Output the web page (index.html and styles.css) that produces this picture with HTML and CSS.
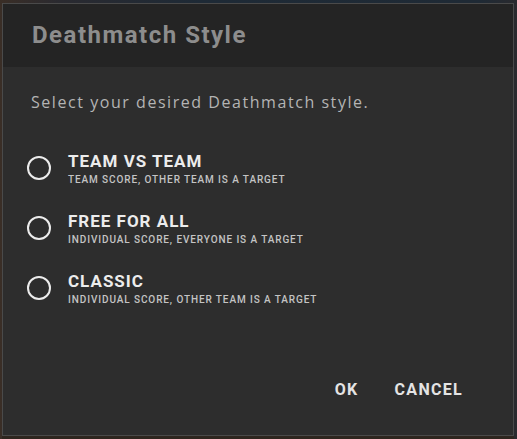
FILE: index.html
```html
<!DOCTYPE html>
<html>
<head>
<meta charset="utf-8">
<link rel="stylesheet" href="styles.css">
</head>
<body>
<div class="dialog">
  <div class="header"><h1 class="title">Deathmatch Style</h1></div>
  <div class="body">
    <p class="prompt">Select your desired Deathmatch style.</p>
    <div class="options">
      <div class="option">
        <span class="radio"></span>
        <div class="label">
          <div class="name">TEAM VS TEAM</div>
          <div class="desc">TEAM SCORE, OTHER TEAM IS A TARGET</div>
        </div>
      </div>
      <div class="option">
        <span class="radio"></span>
        <div class="label">
          <div class="name">FREE FOR ALL</div>
          <div class="desc">INDIVIDUAL SCORE, EVERYONE IS A TARGET</div>
        </div>
      </div>
      <div class="option">
        <span class="radio"></span>
        <div class="label">
          <div class="name">CLASSIC</div>
          <div class="desc">INDIVIDUAL SCORE, OTHER TEAM IS A TARGET</div>
        </div>
      </div>
    </div>
    <div class="actions">
      <button class="btn">OK</button>
      <button class="btn">CANCEL</button>
    </div>
  </div>
</div>
</body>
</html>
```
FILE: styles.css
```css
html, body {
  margin: 0;
  padding: 0;
}
body {
  width: 517px;
  height: 439px;
  overflow: hidden;
  background: linear-gradient(90deg, #3a2e26 0px, #2a2a30 60px, #1e2a36 200px, #1f2a35 480px, #2a2a2e 517px);
  font-family: Roboto, "Liberation Sans", sans-serif;
}
.dialog {
  margin: 3px 0 0 2px;
  width: 510px;
  height: 431px;
  border: 1px solid #4a4a4a;
  display: flex;
  flex-direction: column;
  background: #2d2d2d;
  box-shadow: 0 4px 0 #2e261f;
}
.header {
  height: 63px;
  background: #242424;
  display: flex;
  align-items: center;
  padding-left: 29px;
}
.title {
  margin: 0;
  font-size: 24px;
  font-weight: 700;
  letter-spacing: 1.5px;
  color: #8d8d8d;
  position: relative;
  top: -1px;
}
.body {
  flex: 1;
  display: flex;
  flex-direction: column;
  padding: 0 0 0 24px;
}
.prompt {
  margin: 24px 0 0 4px;
  font-family: "Open Sans", "Noto Sans", sans-serif;
  font-size: 16px;
  letter-spacing: 1.55px;
  color: #b4b4b4;
}
.options {
  display: flex;
  flex-direction: column;
  gap: 20px;
  margin-top: 35px;
}
.option {
  display: flex;
  align-items: center;
  gap: 17px;
  height: 40px;
}
.radio {
  width: 20px;
  height: 20px;
  border: 2px solid #ececec;
  border-radius: 50%;
  flex: none;
}
.label {
  display: flex;
  flex-direction: column;
  gap: 3px;
}
.name {
  font-size: 17px;
  font-weight: 700;
  letter-spacing: 1px;
  color: #ececec;
  line-height: 20px;
}
.desc {
  font-size: 10px;
  font-weight: 500;
  letter-spacing: 0.9px;
  color: #c4c4c4;
  line-height: 12px;
}
.actions {
  margin-top: auto;
  margin-bottom: 36px;
  display: flex;
  justify-content: flex-end;
  gap: 36px;
  padding-right: 50px;
}
.btn {
  background: none;
  border: 0;
  padding: 0;
  font-family: Roboto, "Liberation Sans", sans-serif;
  font-size: 16px;
  font-weight: 700;
  letter-spacing: 1.3px;
  color: #e4e4e4;
}
```
